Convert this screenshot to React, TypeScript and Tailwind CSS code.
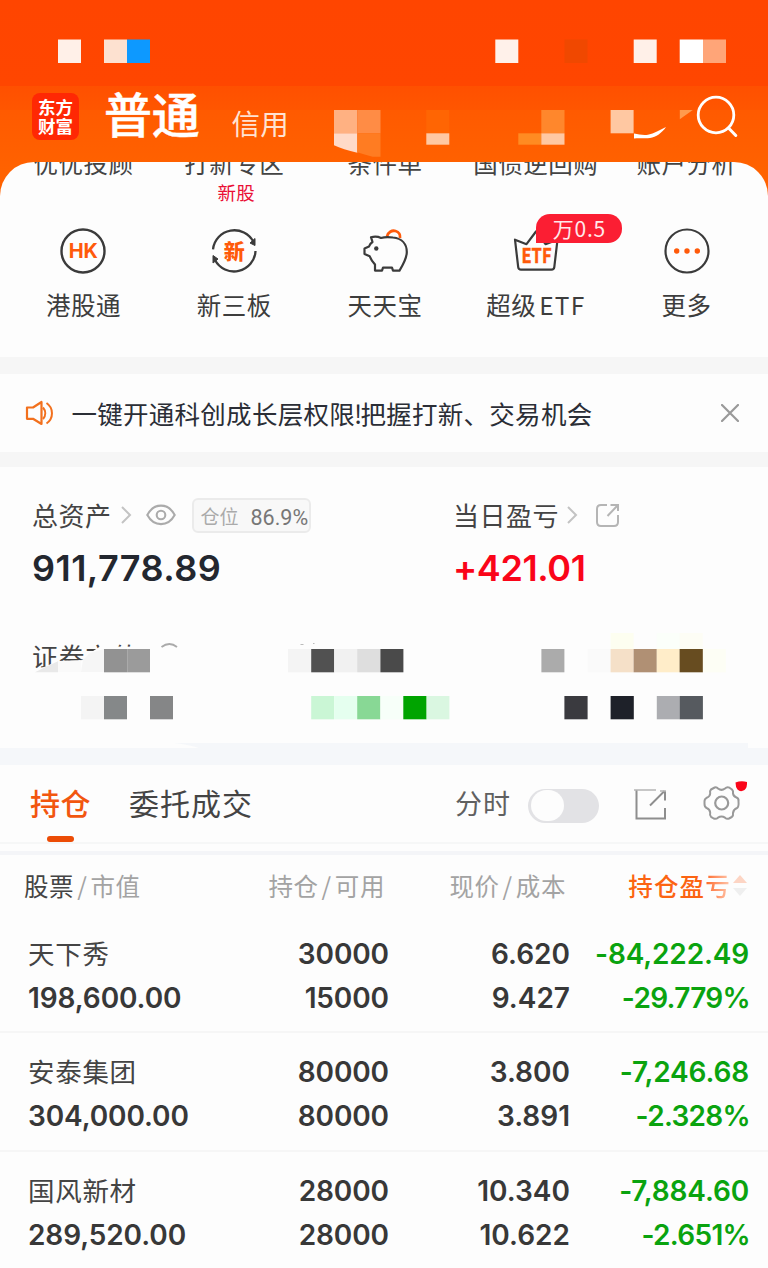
import React from "react";

type Cell = [x: number, y: number, w: number, h: number, fill: string];

function Cells({ items }: { items: Cell[] }) {
  return (
    <>
      {items.map(([x, y, w, h, fill], i) => (
        <rect key={i} x={x} y={y} width={w} height={h} fill={fill} />
      ))}
    </>
  );
}

const statusCells: Cell[] = [
  [58, 39.5, 23, 23.5, "#fff0e8"],
  [104, 39.5, 23, 23.5, "#fde1d0"],
  [127, 39.5, 23, 23.5, "#0d99ff"],
  [495.3, 39.5, 23, 23.5, "#fff1ea"],
  [564.5, 39.5, 23, 23.5, "#f04800"],
  [633.7, 39.5, 23, 23.5, "#fff0e8"],
  [679.7, 39.5, 23.3, 23.5, "#ffffff"],
  [703, 39.5, 23, 23.5, "#ffa578"],
  [334, 110, 23.3, 23.3, "#ffb182"],
  [357.3, 110, 23.2, 23.3, "#ff8c45"],
  [426.3, 110, 23, 23.3, "#ff6503"],
  [426.3, 133.3, 23, 11.4, "#ffc8a2"],
  [541.3, 110, 23.2, 23.3, "#ff872c"],
  [518.3, 133.3, 23, 11.4, "#ff8b22"],
  [541.3, 133.3, 23.2, 11.4, "#ffc8a2"],
  [610.6, 110, 23, 23.3, "#ffc8a2"],
];

const balanceCells: Cell[] = [
  [104, 649, 23.2, 23.3, "#929292"],
  [127.2, 649, 22.8, 23.3, "#9b9b9b"],
  [81, 696, 23, 23.3, "#f4f4f4"],
  [104, 696, 23, 23.3, "#858889"],
  [150, 696, 23, 23.3, "#858687"],
  [288, 649, 23, 23.3, "#f4f4f4"],
  [311.2, 649, 23, 23.3, "#515151"],
  [334.2, 649, 23, 23.3, "#f1f1f1"],
  [357.2, 649, 23.2, 23.3, "#dedede"],
  [380.4, 649, 23, 23.3, "#4a4a4a"],
  [311.2, 696, 23, 23.3, "#caf6d5"],
  [334.2, 696, 23, 23.3, "#e5ffef"],
  [357.2, 696, 23.2, 23.3, "#88d895"],
  [380.4, 696, 23, 23.3, "#f7fff9"],
  [403.3, 696, 23.3, 23.3, "#00a400"],
  [426.6, 696, 22.8, 23.3, "#daf7e1"],
  [541.4, 649, 23, 23.3, "#ababab"],
  [587.6, 649, 23, 23.3, "#fafafa"],
  [610.6, 633, 23, 16, "#fdfef0"],
  [656.8, 633, 23, 16, "#fbfffa"],
  [679.6, 633, 23.2, 16, "#fdfdf5"],
  [610.6, 649, 23, 23.3, "#f5e0c8"],
  [633.6, 649, 23.2, 23.3, "#b09074"],
  [656.8, 649, 22.8, 23.3, "#ffedc9"],
  [679.6, 649, 23.3, 23.3, "#674c20"],
  [702.9, 649, 23, 23.3, "#fdfef5"],
  [564.4, 696, 23.2, 23.3, "#3a3a3f"],
  [610.6, 696, 23.2, 23.3, "#1e2129"],
  [656.8, 696, 22.8, 23.3, "#acadb1"],
  [679.6, 696, 23.3, 23.3, "#565a5f"],
];

function Header() {
  return (
    <header className="relative h-[162px] shrink-0">
      <svg className="absolute left-0 top-0" width="768" height="168" viewBox="0 0 768 168">
        <Cells items={statusCells} />
        <path d="M334 133.3h23.3v19.4Q343 149.500 334 145.300z" fill="#ffdac8" />
        <path d="M357.300 133.300h23.200v23.500h-8Q364 154.500 357.300 152.300z" fill="#ff7c22" />
        <path d="M634 133.500c5 .8 9 2 14 1.200c6-1 12-5 18-7.700c-4 6-10 10-16 11c-6 1-10-.6-16 .6z" fill="#fff" />
        <path d="M679.800 110h13l-13 9.300z" fill="#ff9a4d" />
      </svg>
      <div className="flex h-full items-end px-8 pb-[20px]">
        <div className="mb-[2px] flex h-[47px] w-[47px] flex-col items-center justify-center rounded-[8px] bg-[#ff2804] pb-[2px] text-[17.500px] font-bold leading-[19px] text-white">
          <span className="whitespace-nowrap">东方</span>
          <span className="whitespace-nowrap">财富</span>
        </div>
        <span className="mb-[2px] ml-[25px] text-[48px] font-medium leading-[56px] tracking-[-0.300px] text-white [-webkit-text-stroke:0.500px_white]">普通</span>
        <span className="ml-[32px] text-[28.500px] leading-[38px] tracking-[0.300px] text-[#ffe3d2]">信用</span>
      </div>
      <svg className="absolute left-[691px] top-[90px]" width="52" height="52" viewBox="0 0 52 52" fill="none" stroke="#fff" strokeLinecap="round">
        <circle cx="25" cy="25" r="17.800" strokeWidth="2.800" />
        <path d="M37.500 38l7.300 7.500" strokeWidth="3" />
      </svg>
    </header>
  );
}

const HkIcon = () => (
  <svg width="48" height="48" viewBox="0 0 48 48" fill="none">
    <circle cx="24" cy="24" r="21.500" stroke="#3b3b3b" strokeWidth="2.400" />
    <text x="24.300" y="31.300" textAnchor="middle" fontFamily="Inter" fontWeight="700" fontSize="20" fill="#ff5a0a">HK</text>
  </svg>
);

const BoardIcon = () => (
  <svg width="48" height="48" viewBox="0 0 48 48" fill="none">
    <path d="M3 22.300A21.500 21.500 0 0 1 43.500 15M45.500 24A21.500 21.500 0 0 1 5 33" stroke="#3b3b3b" strokeWidth="2.300" />
    <path d="M45 11.500v7l-5-2.500z M3 36v-7.500l5 3.500z" fill="#3b3b3b" stroke="#3b3b3b" strokeWidth="1" />
    <text x="24.300" y="31.700" textAnchor="middle" fontFamily="Noto Sans CJK SC" fontWeight="900" fontSize="21" fill="#ff5a0a">新</text>
  </svg>
);

const PigIcon = () => (
  <svg width="48" height="48" viewBox="0 0 48 48" fill="none">
    <path d="M26 9.500c1-4.500 5-6.500 8.500-5.500c3.500 1 5 4 4.500 7" stroke="#ff5a0a" strokeWidth="2.800" />
    <path d="M10 10.200C14 9.300 17 9.500 20 11C23 10 27 9.700 32 10.500C41 11.500 45.800 17 45.800 25C45.800 31 42.500 37 38.500 43.600H32L31 40.700H22L21 43.600H14V37.500C11.500 34.500 9.700 32 8.700 29.300L3.500 27V21.500L8 19.500C8.600 17.500 9.800 16 11.500 15Z" stroke="#3b3b3b" strokeWidth="2.200" strokeLinejoin="round" />
    <circle cx="15.300" cy="21.500" r="2.200" fill="#3b3b3b" />
  </svg>
);

const EtfIcon = () => (
  <svg width="48" height="48" viewBox="0 0 48 48" fill="none">
    <path d="M3 12.700l11.500 4.500L24 4.500l9.500 12.700l12-4.500l-3.200 27.500q-.3 2.500-2.800 2.500H9q-2.500 0-2.800-2.500z" stroke="#3b3b3b" strokeWidth="2.200" strokeLinejoin="round" />
    <text x="9.500" y="35.700" fontFamily="Noto Sans CJK SC" fontWeight="700" fontSize="20" textLength="30" lengthAdjust="spacingAndGlyphs" fill="#ff5a0a" stroke="#ff5a0a" strokeWidth="0.500">ETF</text>
  </svg>
);

const MoreIcon = () => (
  <svg width="48" height="48" viewBox="0 0 48 48" fill="none">
    <circle cx="24" cy="24" r="21.500" stroke="#3b3b3b" strokeWidth="2.200" />
    <g fill="#ff5a0a">
      <circle cx="13.700" cy="24" r="2.700" />
      <circle cx="24" cy="24" r="2.700" />
      <circle cx="34.300" cy="24" r="2.700" />
    </g>
  </svg>
);

const shortcuts = [
  { label: "港股通", Icon: HkIcon },
  { label: "新三板", Icon: BoardIcon },
  { label: "天天宝", Icon: PigIcon },
  { label: "超级", latin: "ETF", Icon: EtfIcon, badge: "万0.5" },
  { label: "更多", Icon: MoreIcon },
];

function Shortcuts() {
  return (
    <section className="h-[195px] overflow-hidden rounded-t-[34px] bg-[#fdfdfd] pl-[8px] pr-[6px]">
      <div className="grid h-[65px] grid-cols-5 text-center text-[24.500px] leading-[24px] tracking-[0.500px] text-[#444]">
        {["优优投顾", "打新专区", "条件单", "国债逆回购", "账户分析"].map((name) => (
          <div key={name} className="flex flex-col items-center">
            <span className="-mt-[11.500px] whitespace-nowrap">{name}</span>
            {name === "打新专区" && (
              <span className="mt-[7px] pl-1 text-[18.500px] leading-[20px] tracking-[0.300px] text-[#ea0f35]">新股</span>
            )}
          </div>
        ))}
      </div>
      <div className="grid grid-cols-5">
        {shortcuts.map(({ label, latin, Icon, badge }) => (
          <div key={label} className="relative flex flex-col items-center">
            <Icon />
            {badge && (
              <span className="absolute left-[76px] top-[-13px] flex h-[29px] w-[86px] items-center justify-center rounded-[14px] rounded-bl-none bg-[#fb1e33] pb-px text-[21px] leading-none tracking-[0.800px] text-[#ffe8ea]">
                {badge}
              </span>
            )}
            <span className="mt-[15px] whitespace-nowrap text-[24.500px] leading-[30px] tracking-[0.500px] text-[#3d3d3d]">
              {label}
              {latin && <span className="pl-[3px] tracking-[1.200px]">{latin}</span>}
            </span>
          </div>
        ))}
      </div>
    </section>
  );
}

function Notice() {
  return (
    <section className="flex h-[78px] shrink-0 items-center bg-[#fdfdfd] pb-px pl-6">
      <svg width="32" height="28" viewBox="0 0 32 28" fill="none" stroke="#f2701d" strokeWidth="2.200" strokeLinejoin="round">
        <path d="M3 8.500h6L17.500 3v22L9 19.800H3z" />
        <path d="M19 8.500c3 3.500 3 8 0 11.500M22.500 4c7.300 5 7.300 15.500 0 20.500" strokeWidth="2" />
      </svg>
      <span className="ml-[15.500px] whitespace-nowrap text-[25.500px] leading-[30px] tracking-[0.270px] text-[#2b2e36]">
        一键开通科创成长层权限<span className="-ml-px -mr-[2px]">!</span>把握打新、交易机会
      </span>
      <svg className="ml-auto mr-[29px]" width="18" height="18" viewBox="0 0 18 18" stroke="#999" strokeWidth="2.200" strokeLinecap="round">
        <path d="M1 1l16 16M17 1L1 17" />
      </svg>
    </section>
  );
}

const Chevron = () => (
  <svg width="12" height="18" viewBox="0 0 12 18" fill="none" stroke="#c3c3c3" strokeWidth="2">
    <path d="M2 1l8 8l-8 8" />
  </svg>
);

function Assets() {
  return (
    <section className="relative h-[281px] shrink-0 bg-[#fdfdfd]">
      <div className="flex h-[281px] pl-8 pt-[29px]">
        <div className="w-[421px]">
          <div className="flex h-[38px] items-center">
            <span className="text-[26px] leading-[38px] tracking-[0.500px] text-[#444]">总资产</span>
            <span className="ml-[8px]"><Chevron /></span>
            <svg className="ml-[14px]" width="30" height="22" viewBox="0 0 30 22" fill="none" stroke="#ababab" strokeWidth="2.100">
              <path d="M1.300 11C8-1.500 22-1.500 28.700 11C22 23.200 8 23.200 1.300 11z" />
              <circle cx="15" cy="11" r="4.300" />
            </svg>
            <span className="ml-[16px] flex h-[35px] w-[119px] items-center rounded-[6px] border-2 border-[#ebebeb] bg-[#f8f8f8] pl-[7px] text-[19px] leading-none text-[#aaa]">
              仓位
              <span className="ml-[12px] pt-[5px] font-['Roboto'] text-[21.500px] text-[#777]">86.9%</span>
            </span>
          </div>
          <div className="mt-[12px] font-['Inter'] text-[36px] font-semibold leading-[44px] tracking-[0.450px] text-[#23272f]">911,778.89</div>
        </div>
        <div>
          <div className="flex h-[38px] items-center">
            <span className="text-[26px] leading-[38px] tracking-[0.500px] text-[#444]">当日盈亏</span>
            <span className="ml-[7px]"><Chevron /></span>
            <svg className="ml-[17px]" width="26" height="26" viewBox="0 0 26 26" fill="none" stroke="#b5b5b5" strokeWidth="2">
              <path d="M12 3H6Q2 3 2 7v13q0 4 4 4h13q4 0 4-4v-7M15.500 3H23v6M23 3L12.500 14" />
            </svg>
          </div>
          <div className="mt-[12px] font-['Inter'] text-[36px] font-semibold leading-[44px] tracking-[-0.400px] text-[#fa0519]">+421.01</div>
        </div>
      </div>
      <span className="absolute left-[32px] top-[175px] text-[26px] leading-[28px] tracking-[0.800px] text-[#444]">证券市值</span>
      <svg className="absolute left-0 top-[163px]" width="768" height="122" viewBox="0 630 768 122">
        <path d="M161.500 647q8-6 15.500 0" stroke="#aaa" strokeWidth="1.800" fill="none" />
        <path d="M300.500 644.500h3M313 643.500h1.500" stroke="#bbb" strokeWidth="1" />
        <path d="M32 669l12-2l14-6l25-1l7-7l10-6.500l50 .3V680H32z" fill="#fdfdfd" />
        <path d="M35 672.300l10-5l13-6v11z" fill="#e9e9e9" />
        <path d="M58 672h23v-11H58z" fill="#fafafa" />
        <path d="M83 660l7-7l14-4v23H81z" fill="#f6f6f6" />
        <Cells items={balanceCells} />
        <path d="M174 743h574v9H205Q200 746 174 743z" fill="#f5f7fa" />
        <path d="M0 748h768v4H0z" fill="#f5f7fa" />
      </svg>
    </section>
  );
}

function Tabs() {
  return (
    <section className="flex h-[77px] shrink-0 items-start bg-[#fdfdfd] pl-[30px]">
      <div className="flex flex-col items-center">
        <span className="pt-[19px] text-[30px] font-medium leading-[36px] tracking-[0.500px] text-[#f2560f]">持仓</span>
        <span className="mt-[16px] h-[6px] w-[27px] rounded-[3px] bg-[#ec4c06]" />
      </div>
      <span className="ml-[38px] pt-[19px] text-[30px] leading-[36px] tracking-[1px] text-[#444]">委托成交</span>
      <span className="ml-[202px] pt-[20px] text-[27px] leading-[36px] tracking-[1px] text-[#606060]">分时</span>
      <span className="ml-[17px] mt-[24px] flex h-[34px] w-[71px] items-center rounded-[17px] bg-[#e2e2e5] pl-[3px]">
        <span className="mb-px h-[31px] w-[33px] rounded-full bg-[#fdfdfd]" />
      </span>
      <svg className="ml-[34px] mt-[23px]" width="36" height="34" viewBox="0 0 36 34" fill="none" stroke="#8e8e8e" strokeWidth="2">
        <path d="M3.500 2v28.500H32V20M17 17.500L31.500 3M32 3v9.500" />
        <path d="M1 2h22M27 3h6" stroke="#b5b5b5" strokeWidth="1.300" />
      </svg>
      <svg className="ml-[32px] mt-[13px]" width="48" height="50" viewBox="0 0 48 50" fill="none">
        <path d="M13.700 9.500Q15.500 8.700 17 10.500Q20.500 13.200 24 10.500Q26 8.500 28.500 9.700L31 11.500Q32.500 13 32 15.500Q32.500 18.500 35.500 19.500Q38 20.500 37.500 23.500Q38 29 36 30Q32.500 31.300 32 35Q32.500 37.500 30.800 39L28 40.500Q26 41.500 24 39.700Q20.500 37.500 17 39.700Q15 41.500 12.700 40.500L10 38.800Q8.500 37.500 9.200 34.800Q9 31.300 5.700 30Q3.500 29 3.500 26V23.500Q3.500 20.800 5.700 19.800Q9 18.500 9.200 15.500Q8.600 13 10 11.500Z" stroke="#999" strokeWidth="2" strokeLinejoin="round" />
        <circle cx="20.700" cy="25" r="6.500" stroke="#999" strokeWidth="2.200" />
        <path d="M34.500 4.500Q40 2.500 46 4Q46.500 9 43.500 12Q39.500 14.500 36.500 11.500Q34.500 9 34.500 4.500z" fill="#fa0519" />
      </svg>
    </section>
  );
}

const holdings = [
  ["天下秀", "198,600.00", "30000", "15000", "6.620", "9.427", "-84,222.49", "-29.779%"],
  ["安泰集团", "304,000.00", "80000", "80000", "3.800", "3.891", "-7,246.68", "-2.328%"],
  ["国风新材", "289,520.00", "28000", "28000", "10.340", "10.622", "-7,884.60", "-2.651%"],
];

function Slash() {
  return <span className="px-[3px]">/</span>;
}

function Holdings() {
  return (
    <section className="shrink-0 bg-[#fdfdfd]">
      <div className="grid h-[60px] grid-cols-[225px_160px_181px_202px] pt-[15px] text-[24.500px] leading-[32px] tracking-[0.600px] text-[#a3a3a3]">
        <div className="pl-6"><span className="text-[#444]">股票</span><Slash />市值</div>
        <div className="text-right">持仓<Slash />可用</div>
        <div className="text-right">现价<Slash />成本</div>
        <div className="flex h-[32px] items-center justify-end pr-[20px] font-medium tracking-[1.200px] text-[#fc6412]">
          持仓盈<span className="bg-gradient-to-r from-[#fc6412] to-[#ffc9b0] bg-clip-text text-transparent">亏</span>
          <svg className="ml-[1px]" width="16" height="22" viewBox="0 0 16 22">
            <path d="M8 0l7 8H1z" fill="#fdd5c4" />
            <path d="M8 21l7-8H1z" fill="#efefef" />
          </svg>
        </div>
      </div>
      {holdings.map((h) => (
        <div
          key={h[0]}
          className="grid h-[118.300px] grid-cols-[225px_164px_181px_179px] border-b-2 border-[#f6f6f6] pt-[17px] font-['Inter','Noto_Sans_CJK_SC',sans-serif] text-[28px] font-semibold leading-[44px] text-[#383838]"
        >
          <div className="pl-7">
            <div className="h-[44px] text-[26.500px] font-normal tracking-[0.700px] text-[#444]">{h[0]}</div>
            <div className="tracking-[-0.100px]">{h[1]}</div>
          </div>
          <div className="text-right tracking-[-0.100px]"><div>{h[2]}</div><div>{h[3]}</div></div>
          <div className="text-right"><div>{h[4]}</div><div>{h[5]}</div></div>
          <div className="text-right text-[#0aa30f]">
            <div className="tracking-[-0.150px]">{h[6]}</div>
            <div className="-mr-px tracking-[-0.700px]">{h[7]}</div>
          </div>
        </div>
      ))}
    </section>
  );
}

export default function App() {
  return (
    <div className="flex h-[1268px] w-[768px] flex-col overflow-hidden bg-[#fdfdfd] font-['Noto_Sans_CJK_SC',sans-serif]">
      <div className="shrink-0 bg-[linear-gradient(#ff4500_0px,#ff4600_86px,#ff5000_86px,#ff5600_110px,#ff5a00_110px,#ff6200_170px)]">
        <Header />
        <Shortcuts />
      </div>
      <div className="h-[17px] shrink-0 bg-[#f6f6f6]" />
      <Notice />
      <div className="h-[15px] shrink-0 bg-[#f6f6f6]" />
      <Assets />
      <div className="h-[17px] shrink-0 bg-[#f5f7fa]" />
      <Tabs />
      <div className="h-[13px] shrink-0 border-b-[4px] border-t-2 border-b-[#f4f5f8] border-t-[#f6f7f7]" />
      <Holdings />
    </div>
  );
}
